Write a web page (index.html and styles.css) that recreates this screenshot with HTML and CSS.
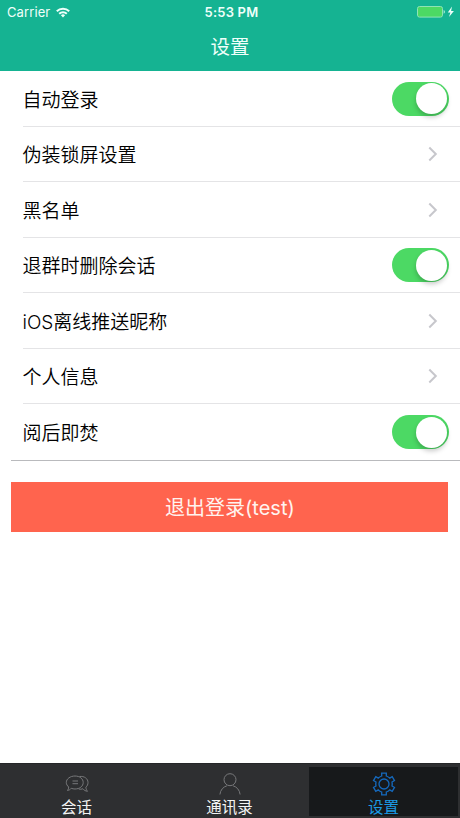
FILE: index.html
```html
<!DOCTYPE html>
<html lang="zh-CN">
<head>
<meta charset="utf-8">
<title>设置</title>
<link rel="stylesheet" href="styles.css">
</head>
<body>
<div class="app">
  <header class="header">
    <div class="status">
      <div class="status-left"><span>Carrier</span>
        <svg class="wifi" viewBox="0 0 14 11" width="14" height="11" fill="none" stroke="#effffa" stroke-width="2"><path d="M.8 4.2a8.800 8.800 0 0 1 12.400 0M3.200 6.700a5.400 5.400 0 0 1 7.600 0"/><path d="M7 10.400 4.900 8.300a3 3 0 0 1 4.200 0z" fill="#effffa" stroke="none"/></svg>
      </div>
      <div class="clock">5:53 PM</div>
      <div class="status-right">
        <svg viewBox="0 0 38 12" width="38" height="12"><rect x=".5" y=".5" width="25" height="10.600" rx="2" fill="#4cd964" stroke="#8ee5b5" stroke-width="1"/><path d="M26.700 4c1.500.5 1.500 3.200 0 3.700z" fill="#c5f5e2"/><path d="M35 .6 30.800 6.400h2.600L32 11l4.900-6h-2.800z" fill="#effffa"/></svg>
      </div>
    </div>
    <h1 class="title">设置</h1>
  </header>
  <main class="content">
    <ul class="list">
      <li class="row"><span>自动登录</span><i class="switch"></i></li>
      <li class="row"><span>伪装锁屏设置</span><svg class="chevron" viewBox="0 0 10 16"><path d="m1.300 1.500 6.500 6.500-6.500 6.500"/></svg></li>
      <li class="row"><span>黑名单</span><svg class="chevron" viewBox="0 0 10 16"><path d="m1.300 1.500 6.500 6.500-6.500 6.500"/></svg></li>
      <li class="row"><span>退群时删除会话</span><i class="switch"></i></li>
      <li class="row"><span>iOS离线推送昵称</span><svg class="chevron" viewBox="0 0 10 16"><path d="m1.300 1.500 6.500 6.500-6.500 6.500"/></svg></li>
      <li class="row"><span>个人信息</span><svg class="chevron" viewBox="0 0 10 16"><path d="m1.300 1.500 6.500 6.500-6.500 6.500"/></svg></li>
      <li class="row"><span>阅后即焚</span><i class="switch"></i></li>
    </ul>
    <div class="footer"><button class="logout">退出登录(test)</button></div>
  </main>
  <nav class="tabs">
    <div class="tab">
      <svg viewBox="0 0 24 24" width="24" height="24"><path d="M10 4c4.700 0 8.200 2.800 8.200 6.500S14.700 17 10 17c-1.400 0-2.600-.2-3.700-.7-1 1.200-2.300 2-3.800 2.200.8-.9 1.200-2.200 1.200-3.500C2.300 13.800 1.300 12.300 1.300 10.500 1.300 6.800 5.300 4 10 4zM7.500 9h5.500M7.500 11.700h5.500M14.500 4.500c4.800-.6 8.500 2.100 8.500 6 0 1.900-.7 3.500-2.100 4.600 0 1.400.5 2.900 1.600 4.200-2-.2-3.500-1.100-4.600-2.500-1.300.5-2.800.6-4.200.2"/></svg>
      <span>会话</span>
    </div>
    <div class="tab">
      <svg viewBox="0 0 24 24" width="24" height="24"><circle cx="12" cy="7.700" r="6"/><path d="M1.900 22.500c.5-4.700 3.400-7.600 7-8.700M15.100 13.800c3.600 1.100 6.500 4 7 8.700"/></svg>
      <span>通讯录</span>
    </div>
    <div class="tab active">
      <svg viewBox="-12 -12 24 24" width="24" height="24"><path d="M-2.300-8V-10.900H2.300V-8Q4.200-7.300 5.700-5.900L8.200-7.400 10.500-3.400 8-2Q8.500 0 8 2L10.500 3.400 8.200 7.400 5.700 5.900Q4.200 7.300 2.300 8V10.900H-2.300V8Q-4.200 7.300-5.700 5.900L-8.200 7.400-10.500 3.400-8 2Q-8.500 0-8-2L-10.500-3.400-8.200-7.400-5.700-5.900Q-4.200-7.300-2.300-8z"/><circle r="5"/></svg>
      <span>设置</span>
    </div>
  </nav>
</div>
</body>
</html>
```
FILE: styles.css
```css
* { box-sizing: border-box; }
body {
  margin: 0;
  background: #fff;
  color: #000;
  font-family: Inter, "Noto Sans CJK SC", sans-serif;
}
.app {
  display: flex;
  flex-direction: column;
  height: 818px;
  overflow: hidden;
}
.header {
  height: 71.300px;
  flex: none;
  background: #15b392;
  color: #effffa;
}
.status {
  display: grid;
  grid-template-columns: 1fr auto 1fr;
  align-items: center;
  height: 24px;
  padding: 0 5px 0 7px;
  font-size: 13px;
}
.status-left { display: flex; align-items: center; gap: 6px; letter-spacing: .1px; }
.clock { padding-left: 1px; font-weight: 600; letter-spacing: .2px; }
.status-right { display: flex; justify-content: flex-end; }
.title {
  margin: 0;
  height: 46px;
  line-height: 47px;
  text-align: center;
  font-size: 19.500px;
  font-weight: 400;
}
.content { flex: 1; }
.list {
  margin: 0 0 0 11px;
  padding: 0;
  list-style: none;
  border-bottom: 1px solid #b9babd;
}
.row {
  display: flex;
  align-items: center;
  justify-content: space-between;
  height: 55.500px;
  margin-left: 11.500px;
  padding-right: 11.500px;
  border-bottom: 1px solid #e4e4e6;
  font-size: 19px;
  font-weight: 350;
}
.row span { padding-bottom: 1px; }
.row:last-child { border-bottom: 0; }
.chevron {
  width: 10px;
  height: 16px;
  margin-right: 10.500px;
  fill: none;
  stroke: #c7c7cc;
  stroke-width: 2;
}
.switch {
  display: flex;
  justify-content: flex-end;
  width: 56.500px;
  height: 34px;
  padding: 1.500px;
  border-radius: 17px;
  background: #4cd964;
}
.switch::before {
  content: "";
  width: 31px;
  height: 31px;
  border-radius: 50%;
  background: #fff;
  box-shadow: 0 3px 5px rgba(0, 0, 0, .22);
}
.footer { padding: 21px 11.600px 0 11.400px; }
.logout {
  display: block;
  width: 100%;
  height: 50px;
  border: 0;
  background: #ff644e;
  color: #fff3ef;
  font: inherit;
  font-size: 20px;
}
.tabs {
  display: flex;
  flex: none;
  height: 55px;
  padding: 3px 2px 2px 0;
  background: #2e2f31;
  border-top: 1px solid #252628;
}
.tab {
  flex: 0 0 153px;
  display: flex;
  flex-direction: column;
  align-items: center;
  padding-top: 5px;
  color: #f4f4f4;
  font-size: 15.500px;
  line-height: 23px;
}
.tab svg { flex: none; fill: none; stroke: #77787a; stroke-width: 1; }
.active {
  flex: 0 0 149px;
  margin-left: auto;
  background: #17191b;
  color: #1b9be6;
}
.active svg { stroke: #1569bd; stroke-width: 1.300; }
```
